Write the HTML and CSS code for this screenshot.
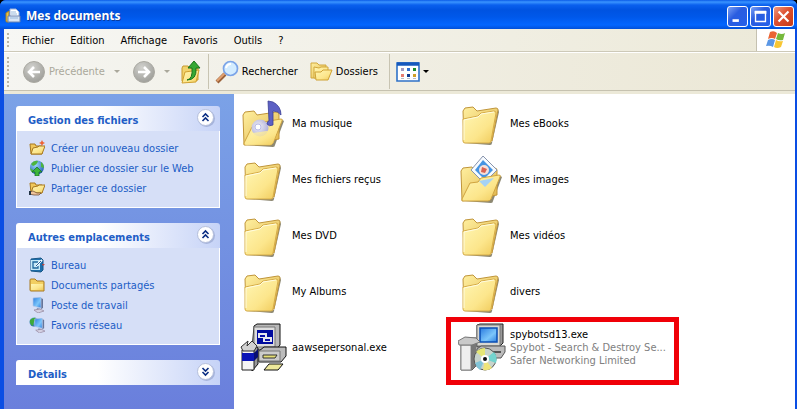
FILE: index.html
```html
<!DOCTYPE html>
<html lang="fr">
<head>
<meta charset="utf-8">
<title>Mes documents</title>
<link rel="stylesheet" href="styles.css">
</head>
<body>
<svg class="defs" aria-hidden="true">
  <defs>
    <linearGradient id="paper" x1="0" y1="0" x2="1" y2="1"><stop offset="0" stop-color="#fff6b4"/><stop offset=".6" stop-color="#fce68c"/><stop offset="1" stop-color="#efc958"/></linearGradient>
    <linearGradient id="back" x1="0" y1="0" x2="1" y2="1"><stop offset="0" stop-color="#fff0a0"/><stop offset="1" stop-color="#e0b44a"/></linearGradient>
    <radialGradient id="gray" cx=".4" cy=".3" r=".8"><stop offset="0" stop-color="#d2d2ce"/><stop offset="1" stop-color="#999994"/></radialGradient>
    <radialGradient id="note" cx=".4" cy=".4" r=".7"><stop offset="0" stop-color="#f2f3ff"/><stop offset="1" stop-color="#9c9fe0"/></radialGradient>
    <radialGradient id="globe" cx=".4" cy=".3" r=".8"><stop offset="0" stop-color="#9fd8ff"/><stop offset="1" stop-color="#1353a8"/></radialGradient>
    <linearGradient id="screen" x1="0" y1="0" x2="1" y2="1"><stop offset="0" stop-color="#2a7be0"/><stop offset=".6" stop-color="#7cc6fa"/><stop offset="1" stop-color="#2d7fe0"/></linearGradient>
    <symbol id="folder" viewBox="0 0 48 48">
      <path d="M6 44l26 2q2 0 2-2l7-31-1-3-6 33z" fill="#5d5536" opacity=".7"/>
      <path d="M5 12l2-3 8-1 4 4 19-3q2 0 2 2l-6 31-28 1z" fill="url(#back)" stroke="#c0953a"/>
      <path d="M5 42V20l15-3 3-3 13-2q2 0 2 2l-5 28q0 2-2 2L7 44q-2 0-2-2z" fill="url(#paper)" stroke="#d6ac48"/>
      <path d="M6 41V21l14-3 3-3 13-2" fill="none" stroke="#fffce0"/>
    </symbol>
    <symbol id="open-back" viewBox="0 0 48 48">
      <path d="M5 46l28 2q2 0 2-2l9-24-3-2-8 24z" fill="#5d5536" opacity=".7"/>
      <path d="M3 16l2-3 9-1 3 4 19-3q3 0 3 2v25L4 46z" fill="url(#back)" stroke="#c0953a"/>
    </symbol>
    <symbol id="open-front" viewBox="0 0 48 48">
      <path d="M12 28l8-1 3-4 18-3q2 0 1 2l-9 22q-1 2-3 2L5 46q-1 0-1-2z" fill="url(#paper)" stroke="#d0a440"/>
    </symbol>
    <symbol id="minifolder" viewBox="0 0 16 16">
      <path d="M1 3q0-1 1-1h4l2 2h6q1 0 1 1v9H2q-1 0-1-1z" fill="#f2cf62" stroke="#a87920"/>
      <path d="M2 13V7h12v6z" fill="url(#paper)"/>
    </symbol>
    <symbol id="miniopen" viewBox="0 0 16 16">
      <path d="M1 4h5l1 2h6v8H2z" fill="#f0c75a" stroke="#a87920"/>
      <path d="M4 8l5-1 1-1h6l-3 8H2z" fill="url(#paper)" stroke="#a87920"/>
    </symbol>
    <symbol id="monitor" viewBox="0 0 16 16">
      <path d="M12 1l2 1v9l-2 1z" fill="#667599"/>
      <path d="M4 1l8-1v11l-8-2z" fill="url(#screen)" stroke="#b5c6e8" stroke-width=".7"/>
      <path d="M8 11l4 1v2H7z" fill="#8794b5"/><path d="M5 13l6-1 4 2-6 2z" fill="#d3d0e2" stroke="#8a7890" stroke-width=".6"/>
    </symbol>
    <symbol id="chevrons" viewBox="0 0 20 20">
      <circle cx="10.500" cy="10.500" r="8.500" fill="#8d9cc8" opacity=".6"/><circle cx="9.500" cy="9.500" r="8" fill="#fff" stroke="#b5bfdb"/>
      <path d="M6.500 9l3-3 3 3m-6 4l3-3 3 3" fill="none" stroke="#0a2d83" stroke-width="1.600"/>
    </symbol>
  </defs>
</svg>
<div class="window">
  <header class="titlebar">
    <svg class="i16" viewBox="0 0 16 16"><path d="M1 5l3-2v11H2q-1 0-1-1z" fill="#e8c34c" stroke="#a98222"/><path d="M5 1h6l3 3v6H5z" fill="#fff" stroke="#9fb2d6"/><path d="M3 8h12v6H3z" fill="#d8e4f4" stroke="#6b83b0"/><path d="M5 10h8M6 4h5M6 6h6" stroke="#96b8dc"/></svg>
    <h1>Mes documents</h1>
    <div class="controls">
      <button class="ctl" aria-label="Réduire"><svg viewBox="0 0 21 21"><path d="M5 15h7" stroke="#fff" stroke-width="3"/></svg></button>
      <button class="ctl" aria-label="Agrandir"><svg viewBox="0 0 21 21"><path d="M5 5h11v11H5z" fill="none" stroke="#fff" stroke-width="1.500"/><path d="M4 6h13" stroke="#fff" stroke-width="3"/></svg></button>
      <button class="ctl close" aria-label="Fermer"><svg viewBox="0 0 21 21"><path d="M5 5l11 11m0-11L5 16" stroke="#fff" stroke-width="2.400"/></svg></button>
    </div>
  </header>
  <div class="frame">
    <nav class="menubar">
      <span class="grip"></span>
      <button>Fichier</button><button>Edition</button><button>Affichage</button><button>Favoris</button><button>Outils</button><button>?</button>
      <span class="flag"><svg viewBox="0 0 20 18"><path d="M4 1q4-2 7 1L9 8Q6 6 2 8z" fill="#ea6534"/><path d="M12 2q4 2 7 0l-2 7q-4 1-7-1z" fill="#76b93c"/><path d="M2 9q4-2 7 0l-2 7q-3-2-7-1z" fill="#5b97e5"/><path d="M10 9q3 2 7 1l-2 6q-4 2-7 0z" fill="#f8c634"/></svg></span>
    </nav>
    <div class="toolbar">
      <span class="grip"></span>
      <button class="tool off"><svg class="i24" viewBox="0 0 24 24"><circle cx="12" cy="12" r="10.500" fill="url(#gray)" stroke="#aaa9a2"/><path d="M18 12H7m5-5l-5 5 5 5" fill="none" stroke="#fff" stroke-width="2.600"/></svg>Précédente<i class="caret"></i></button>
      <button class="tool off next" aria-label="Suivante"><svg class="i24" viewBox="0 0 24 24"><circle cx="12" cy="12" r="10.500" fill="url(#gray)" stroke="#aaa9a2"/><path d="M6 12h11m-5-5l5 5-5 5" fill="none" stroke="#fff" stroke-width="2.600"/></svg><i class="caret"></i></button>
      <button class="tool" aria-label="Dossier parent"><svg class="i24" viewBox="0 0 24 24"><path d="M3 8l1-2h5l2 2h8v12l-13 2-3-1z" fill="#f1d36c" stroke="#c79a30"/><path d="M6 12l14-2-3 12-14 1z" fill="url(#paper)" stroke="#d0a030"/><path d="M8 20q6-1 5-12H9l6-7 6 7h-4q1 12-9 12z" fill="#36a834" stroke="#1a741d"/></svg></button>
      <span class="rule"></span>
      <button class="tool"><svg class="i24" viewBox="0 0 24 24"><path d="M2 22l8-8" stroke="#9a6038" stroke-width="4"/><path d="M2 21l8-8" stroke="#e2a071" stroke-width="2"/><circle cx="15.500" cy="8.500" r="7" fill="#d3ecff" stroke="#7ba4e8" stroke-width="1.700"/><path d="M11 8q1-4 5-4" fill="none" stroke="#fff" stroke-width="2"/></svg>Rechercher</button>
      <button class="tool folders"><svg class="i24" viewBox="0 0 24 24"><path d="M2 3h6l2 2h7v13H2z" fill="url(#back)" stroke="#d1a83c"/><path d="M5 7l5 1 2-1h7v11H5z" fill="url(#paper)" stroke="#d1a83c"/><path d="M6 12h6l2-2h9l-4 10H7z" fill="url(#paper)" stroke="#cfa235"/></svg>Dossiers</button>
      <span class="rule"></span>
      <button class="tool views" aria-label="Affichages"><svg class="i24" viewBox="0 0 24 24"><path d="M1 3h22v18H1z" fill="#fff" stroke="#2f72c8" stroke-width="1.600"/><path d="M1 4h22" stroke="#1558bd" stroke-width="3.500"/><path d="M5 8h3v3H5z" fill="#a49ac0"/><path d="M11 8h3v3h-3z" fill="#3170d0"/><path d="M17 8h3v3h-3z" fill="#1d8d2e"/><path d="M5 14h3v3H5z" fill="#e77d70"/><path d="M11 14h3v3h-3z" fill="#123c91"/><path d="M17 14h3v3h-3z" fill="#d1a026"/><path d="M5 18.500h3m3 0h3m3 0h3" stroke="#b7bdc8"/></svg><i class="caret"></i></button>
    </div>
    <div class="content">
      <aside class="side">
        <section class="panel">
          <h2>Gestion des fichiers<button class="fold" aria-label="Replier"><svg><use href="#chevrons"/></svg></button></h2>
          <ul>
            <li><a href="#"><svg class="i16" viewBox="0 0 16 16"><use href="#miniopen"/><path d="M13 0l1 2 2 1-2 1-1 2-1-2-2-1 2-1z" fill="#ee6333"/></svg>Créer un nouveau dossier</a></li>
            <li><a href="#"><svg class="i16" viewBox="0 0 16 16"><circle cx="8" cy="7.500" r="7" fill="url(#globe)"/><path d="M2 4q3-4 7-3-1 4-5 5zM1 8l3 2v3Q1 11 1 8m11-6q3 2 3 6l-3-1z" fill="#4eb53d"/><path d="M8 7l5 5h-3v4H6v-4H3z" fill="#3cb63a" stroke="#146b20" stroke-width=".7"/></svg>Publier ce dossier sur le Web</a></li>
            <li><a href="#"><svg class="i16" viewBox="0 0 16 16"><use href="#miniopen" y="-1"/><path d="M0 12l4-1 4 2h4l-2 2H5l-5-1z" fill="#f0c49b" stroke="#614026" stroke-width=".7"/><path d="M0 11h2v4H0z" fill="#234"/></svg>Partager ce dossier</a></li>
          </ul>
        </section>
        <section class="panel">
          <h2>Autres emplacements<button class="fold" aria-label="Replier"><svg><use href="#chevrons"/></svg></button></h2>
          <ul>
            <li><a href="#"><svg class="i16" viewBox="0 0 16 16"><path d="M2 2l10-1 2 2v10l-2 2-10-1z" fill="#1c6eac" stroke="#195786"/><path d="M2 3h9v10H2z" fill="#c3e8f8"/><path d="M9 5H4v6h5V9" fill="none" stroke="#22699d" stroke-width="1.300"/><path d="M7 9l6-6" stroke="#fff" stroke-width="2"/><path d="M7 9l5-5" stroke="#215f96"/><path d="M13 7h3l-2 2z" fill="#c5443a"/></svg>Bureau</a></li>
            <li><a href="#"><svg class="i16"><use href="#minifolder"/></svg>Documents partagés</a></li>
            <li><a href="#"><svg class="i16"><use href="#monitor"/></svg>Poste de travail</a></li>
            <li><a href="#"><svg class="i16" viewBox="0 0 16 16"><circle cx="5" cy="5" r="4.500" fill="url(#globe)"/><path d="M1 3q3-3 6-2L5 5 4 9Q0 7 1 3" fill="#3eaa3a"/><use href="#monitor" x="2" y="1" width="15" height="15"/></svg>Favoris réseau</a></li>
          </ul>
        </section>
        <section class="panel">
          <h2>Détails<button class="fold" aria-label="Déplier"><svg viewBox="0 0 20 20"><circle cx="10.500" cy="10.500" r="8.500" fill="#8d9cc8" opacity=".6"/><circle cx="9.500" cy="9.500" r="8" fill="#fff" stroke="#b5bfdb"/><path d="M6.500 6l3 3 3-3m-6 4l3 3 3-3" fill="none" stroke="#0a2d83" stroke-width="1.600"/></svg></button></h2>
        </section>
      </aside>
      <main class="files">
        <a class="file" href="#"><svg class="i48" viewBox="0 0 48 48"><use href="#open-back"/><use href="#open-front"/><circle cx="20" cy="29" r="8.500" fill="url(#note)" opacity=".9"/><circle cx="18" cy="28" r="3" fill="#fff" stroke="#b9bbe8"/><path d="M28 2l5 1q8 4 8 13-3-4-8-4v14q-4 2-6-1 0-3 2-3z" fill="#5c60c4" stroke="#3a3d94" stroke-width=".8"/><path d="M12 34l8-1 18-3-5 14q-1 2-3 2L5 46z" fill="url(#paper)" opacity=".8"/></svg><span>Ma musique</span></a>
        <a class="file" href="#"><svg class="i48"><use href="#folder"/></svg><span>Mes eBooks</span></a>
        <a class="file" href="#"><svg class="i48"><use href="#folder"/></svg><span>Mes fichiers reçus</span></a>
        <a class="file" href="#"><svg class="i48" viewBox="0 0 48 48"><use href="#open-back"/><path d="M25 1l14 14-13 13-13-13z" fill="#f7fbff" stroke="#8793ac"/><path d="M25 5l10 10-9 9-9-9z" fill="#4694e2"/><circle cx="26" cy="15" r="5" fill="#f6dfd9"/><path d="M24 12l5 2-2 4-4-1z" fill="#da6252"/><use href="#open-front"/><path d="M21 26l15-3-9 9z" fill="#a5d2f5"/></svg><span>Mes images</span></a>
        <a class="file" href="#"><svg class="i48"><use href="#folder"/></svg><span>Mes DVD</span></a>
        <a class="file" href="#"><svg class="i48"><use href="#folder"/></svg><span>Mes vidéos</span></a>
        <a class="file" href="#"><svg class="i48"><use href="#folder"/></svg><span>My Albums</span></a>
        <a class="file" href="#"><svg class="i48"><use href="#folder"/></svg><span>divers</span></a>
        <a class="file" href="#"><svg class="i48" viewBox="0 0 48 48"><path d="M14 3l3-2h23v21l-4 5H12z" fill="#b8b8b8" stroke="#111"/><path d="M14 4h21v20H14z" fill="#ddd" stroke="#777"/><path d="M17 7h16v14H17z" fill="#000b9e"/><path d="M18 10h9v4h5v5h-9v-4h-5z" fill="#e8e8ee"/><path d="M20 12h5v4h5v2h-5v-4h-5z" fill="#0910aa"/><path d="M19 28l5-4h22v9l-5 6H19z" fill="#bbb" stroke="#111"/><path d="M19 28h21v10H19z" fill="#ccc" stroke="#777"/><path d="M23 32h14l-2 3H23z" fill="#e5df76" stroke="#333"/><path d="M29 41h14l-5 6H24z" fill="#eee89a" stroke="#111"/><path d="M15 23l3 2v16l-6 7V27z" fill="#999" stroke="#111"/><path d="M2 27h12v20H2z" fill="#f5f5f5" stroke="#222"/><path d="M2 30h12v8H2z" fill="#0a14b5"/><path d="M14 30l4-4v8l-4 4z" fill="#070d70"/><path d="M1 24l7-6-1 5 5-5 5 5-3 5H3z" fill="#d2d2d2" stroke="#333"/></svg><span>aawsepersonal.exe</span></a>
        <a class="file marked" href="#"><svg class="i48" viewBox="0 0 48 48"><path d="M19 2l3-1h23v19l-4 4H19z" fill="#999" stroke="#222"/><path d="M19 2h23v21H19z" fill="#d8d8d2" stroke="#777"/><path d="M22 5h17v14H22z" fill="url(#screen)" stroke="#0a4db4" stroke-width="1.500"/><path d="M19 26l4-3h24v6l-4 6H19z" fill="#bbb" stroke="#555"/><path d="M24 29h19" stroke="#555" stroke-width="2"/><path d="M3 18l4-3h11v28l-4 4H3z" fill="#bcbcbc" stroke="#555"/><path d="M3 22h10v25H3z" fill="#eee" stroke="#888"/><path d="M13 22l5-5v26l-5 4z" fill="#777"/><path d="M0 18l7-4 11 1 4 4-8 3H1z" fill="#c9c9c9" stroke="#777"/><circle cx="27" cy="36" r="11" fill="#c8d4cc" stroke="#555"/><path d="M27 36L18 29q4-4 9-4z" fill="#e5e777"/><path d="M27 36l9-7q4 5 2 11z" fill="#73d4cf"/><path d="M27 36l7 9q-4 3-9 2z" fill="#eee479"/><path d="M27 36l-10 4q1 4 5 7z" fill="#81c5d9"/><circle cx="27" cy="36" r="4" fill="#fff"/><circle cx="27" cy="36" r="2" fill="#111"/></svg><span>spybotsd13.exe<small>Spybot - Search &amp; Destroy Se...</small><small>Safer Networking Limited</small></span></a>
      </main>
    </div>
  </div>
</div>
</body>
</html>
```
FILE: styles.css
```css
* { box-sizing: border-box; }
body {
  margin: 0;
  background: #000;
  color: #000;
  font: 11px/13px "DejaVu Sans Condensed", "DejaVu Sans", sans-serif;
}
button { margin: 0; padding: 0; border: 0; background: none; color: inherit; font: inherit; }
a { color: inherit; text-decoration: none; }
svg { display: block; flex: none; }
.defs { position: absolute; width: 0; height: 0; }
.i16 { width: 16px; height: 16px; }
.i24 { width: 24px; height: 24px; }
.i48 { width: 48px; height: 48px; }

.window { display: flex; flex-direction: column; min-height: 100vh; background: #0a4ee4; border-radius: 6px 6px 0 0; overflow: hidden; }
.titlebar {
  display: flex; align-items: center; height: 29px; padding: 3px 3px 0 5px;
  background: linear-gradient(#0b5be8, #3a94ff 2px, #0a60ee 5px, #0053e1 10px, #0058ea 17px, #0366ff 25px, #0150d8);
}
.titlebar h1 { flex: 1; margin: 0 0 0 5px; color: #fff; font: bold 12px/16px "Open Sans", sans-serif; text-shadow: 1px 1px #0a3a9c; }
.controls { display: flex; gap: 2px; }
.ctl { width: 21px; height: 21px; border: 1px solid #fff; border-radius: 3px; background: linear-gradient(135deg, #7aa0f5, #2a5de0 40%, #2460ea); }
.ctl svg { width: 19px; height: 19px; }
.ctl.close { background: linear-gradient(135deg, #f09a80, #dd5030 45%, #c63c18); }

.frame { display: flex; flex: 1; flex-direction: column; padding: 0 2px 0 4px; }
.menubar, .toolbar { display: flex; align-items: center; background: linear-gradient(90deg, #f7f7f4, #ece9d8); }
.menubar { height: 23px; padding-left: 3px; border-bottom: 1px solid #cdc9b8; }
.menubar button { margin-right: 16px; }
.grip { width: 2px; margin-right: 13px; background: repeating-linear-gradient(#b9b5a5 0 2px, transparent 2px 4px); }
.menubar .grip { height: 14px; }
.flag { display: flex; align-items: center; justify-content: center; width: 39px; height: 22px; margin-left: auto; border-left: 1px solid #c5c1b0; background: #fff; }
.flag svg { width: 20px; height: 18px; }

.toolbar { height: 42px; padding: 0 0 1px 3px; border-top: 1px solid #fff; border-bottom: 3px solid #ece9d8; background: linear-gradient(transparent 37px, #c6c2b0 37px, #c6c2b0 38px), linear-gradient(90deg, #f5f5f1, #ebe7d5); background-clip: padding-box; }
.toolbar .grip { height: 30px; }
.tool { display: flex; align-items: center; gap: 3px; }
.off { color: #aaa89b; }
.caret { border: 3px solid transparent; border-top-color: currentColor; border-bottom: 0; }
.off .caret { margin: 0 12px 0 6px; }
.next .caret { margin-left: 5px; margin-right: 9px; }
.rule { width: 1px; height: 35px; margin: 0 6px 0 5px; background: #c8c4b2; }
.folders { margin-left: 11px; }
.folders + .rule { margin-left: 11px; }

.content { display: flex; flex: 1; background: #fff; }
.side { display: flex; flex: none; flex-direction: column; gap: 15px; width: 230px; padding: 12px 14px 12px 12px; background: linear-gradient(#7ba2e7, #6a7fdc); color: #215dc6; }
.panel h2 {
  display: flex; align-items: center; justify-content: space-between; height: 25px; margin: 0; padding: 3px 4px 0 12px;
  border-radius: 3px 3px 0 0; background: linear-gradient(90deg, #fff 40%, #c6d3f7); font: bold 11px/13px "DejaVu Sans Condensed", sans-serif;
}
.fold { margin-top: -4px; }
.fold, .fold svg { width: 20px; height: 20px; }
.panel ul { display: flex; flex-direction: column; gap: 4px; margin: 0; padding: 9px 12px 11px; border: 1px solid #fff; border-top: 0; background: #d6dff7; list-style: none; }
.panel a { display: flex; align-items: center; gap: 6px; height: 16px; }

.files { display: grid; flex: 1; grid-template-columns: 218px 218px; grid-auto-rows: 48px; gap: 8px 0; align-content: start; padding: 5px 6px; }
.file { position: relative; display: flex; align-items: center; gap: 4px; white-space: nowrap; }
.file small { display: block; color: #808080; font-size: 11px; }
.marked::after { content: ""; position: absolute; inset: -6px -3px -14px -12px; border: 5px solid #f00008; }
```
